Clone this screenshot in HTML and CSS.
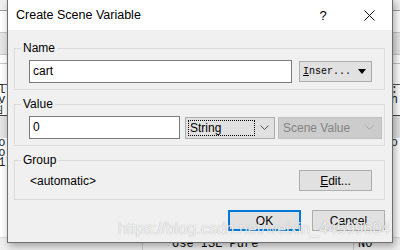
FILE: index.html
```html
<!DOCTYPE html>
<html lang="en">
<head>
  <meta charset="UTF-8" />
  <title>Create Scene Variable</title>
  <link rel="stylesheet" href="styles.css">
</head>
<body>
  <!-- window behind the dialog -->
  <div class="app">
    <div class="app-row r-top"></div>
    <div class="app-row r-white"></div>
    <div class="app-row r-grey"></div>
    <div class="app-row r-thin"></div>
    <div class="app-row r-head"></div>
    <div class="app-row r-code"><span class="code">  al</span><span class="code right">:</span></div>
    <div class="app-row r-code"><span class="code">  ev</span><span class="code right">h</span></div>
    <div class="app-row r-code"><span class="code"> 函</span></div>
    <div class="app-row r-sel"></div>
    <div class="app-row r-code"><span class="code">  ro</span><span class="code right">o</span></div>
    <div class="app-row r-code"><span class="code">  ro</span></div>
    <div class="app-row r-code"><span class="code">  11</span></div>
    <div class="app-row r-fill"></div>
    <div class="app-row r-bottom">
      <span class="cell c-left"></span>
      <span class="cell c-mid">Use ISE Pure</span>
      <span class="cell c-right">No</span>
    </div>
  </div>

  <div class="dialog">
    <div class="titlebar">
      <span class="title">Create Scene Variable</span>
      <span class="help">?</span>
      <span class="close">
        <svg width="11" height="11" viewBox="0 0 11 11"><path d="M0.5 0.5 L10.5 10.5 M10.5 0.5 L0.5 10.5" stroke="#111" stroke-width="1" fill="none"/></svg>
      </span>
    </div>

    <div class="content">
      <fieldset class="group">
        <legend>Name</legend>
        <div class="row">
          <div class="field name-field">cart</div>
          <div class="btn drop"><span class="mono"><u>I</u>nser...</span><span class="tri"></span></div>
        </div>
      </fieldset>

      <fieldset class="group">
        <legend>Value</legend>
        <div class="row row-value">
          <div class="field value-field">0</div>
          <div class="combo type-combo">
            <span class="focus">String</span>
            <svg class="chev" width="9" height="5" viewBox="0 0 9 5"><path d="M0.5 0.5 L4.5 4.5 L8.5 0.5" stroke="#555" fill="none"/></svg>
          </div>
          <div class="combo disabled">
            <span>Scene Value</span>
            <svg class="chev" width="9" height="5" viewBox="0 0 9 5"><path d="M0.5 0.5 L4.5 4.5 L8.5 0.5" stroke="#aaa" fill="none"/></svg>
          </div>
        </div>
      </fieldset>

      <fieldset class="group group-last">
        <legend>Group</legend>
        <div class="row row-group">
          <span class="auto">&lt;automatic&gt;</span>
          <div class="btn"><span><u>E</u>dit...</span></div>
        </div>
      </fieldset>

      <div class="actions">
        <div class="btn default">OK</div>
        <div class="btn">Cancel</div>
      </div>
    </div>
  </div>

  <div class="watermark">https://blog.csdn.net/weixin_44599604</div>
</body>
</html>
```

FILE: styles.css
```css
body {
  margin: 0;
  width: 400px;
  height: 250px;
  overflow: hidden;
  position: relative;
  background: #f0f0f0;
  font-family: "Liberation Sans", Arial, sans-serif;
  font-size: 12px;
  color: #000;
}

/* background window */
.app {
  height: 250px;
  display: flex;
  flex-direction: column;
  font-family: "Liberation Mono", "Noto Sans CJK SC", monospace;
  font-size: 12px;
}
.app-row {
  display: flex;
  justify-content: space-between;
  background: #fff;
  flex-shrink: 0;
}
.r-top { height: 10px; background: #f0f0f0; border-bottom: 1px solid #a0a0a0; }
.r-white { height: 21px; border-bottom: 1px solid #c8c8c8; }
.r-grey { height: 21px; background: #e6e6e6; border-bottom: 1px solid #c8c8c8; }
.r-thin { height: 8px; border-bottom: 1px solid #c8c8c8; }
.r-head { height: 20px; border-bottom: 1px solid #555; }
.r-code { height: 10px; line-height: 10px; }
.r-sel { height: 22px; background: #e4e4e4; border-top: 1px solid #444; }
.r-fill { flex: 1; }
.r-bottom {
  height: 12px;
  background: #f0f0f0;
  border-top: 1px solid #ddd;
  justify-content: flex-start;
}
.code { margin-left: -9px; color: #222; }
.code.right { margin-right: 2px; }
.cell { height: 12px; line-height: 12px; }
.c-left { width: 142px; border-right: 1px solid #ccc; }
.c-mid { width: 181px; padding-left: 29px; border-right: 1px solid #ccc; }
.c-right { padding-left: 4px; }

/* dialog */
.dialog {
  position: absolute;
  left: 7px;
  top: -1px;
  width: 386px;
  height: 244px;
  box-sizing: border-box;
  border: 1px solid #6f6f6f;
  background: #f0f0f0;
  box-shadow: 2px 3px 8px rgba(0, 0, 0, 0.35);
}
.titlebar {
  height: 30px;
  background: #fff;
  display: flex;
  align-items: center;
}
.title {
  padding-left: 8px;
  font-size: 12.5px;
  flex: 1;
}
.help {
  font-size: 13px;
  width: 46px;
  text-align: center;
}
.close {
  width: 46px;
  display: flex;
  justify-content: center;
}

.content {
  padding-top: 11px;
}
.group {
  margin: 0 7px 7px 6px;
  padding: 5px 12px 6px 14px;
  border: 1px solid #dcdcdc;
  min-width: 0;
}
.group legend {
  margin-left: -8px;
  padding: 0 2px;
  line-height: 14px;
  font-size: 12px;
}
.group-last {
  margin-bottom: 0;
  padding-top: 3px;
  padding-bottom: 8px;
}
.row {
  display: flex;
  align-items: center;
  gap: 7px;
}
.row-value { gap: 0; }
.row-group { justify-content: space-between; }

.field {
  box-sizing: border-box;
  height: 23px;
  line-height: 21px;
  border: 1px solid #7a7a7a;
  background: #fff;
  padding-left: 3px;
  flex-shrink: 0;
}
.name-field { width: 263px; }
.value-field { width: 151px; }

.btn {
  box-sizing: border-box;
  width: 73px;
  height: 21px;
  border: 1px solid #adadad;
  background: #e1e1e1;
  display: flex;
  align-items: center;
  justify-content: center;
  flex-shrink: 0;
}
.btn.default {
  border: 2px solid #0078d7;
}
.drop {
  justify-content: space-between;
  padding: 0 5px 0 3px;
}
.mono {
  font-family: "Liberation Mono", monospace;
  font-size: 10px;
}
.tri {
  width: 0;
  height: 0;
  border-left: 4px solid transparent;
  border-right: 4px solid transparent;
  border-top: 5px solid #000;
}

.combo {
  box-sizing: border-box;
  height: 22px;
  border: 1px solid #adadad;
  background: #e1e1e1;
  display: flex;
  align-items: center;
  justify-content: space-between;
  flex-shrink: 0;
}
.type-combo {
  width: 90px;
  margin-left: 5px;
  padding: 0 5px 0 2px;
}
.focus {
  box-sizing: border-box;
  width: 67px;
  height: 16px;
  line-height: 14px;
  border: 1px dotted #000;
  padding-left: 1px;
}
.combo.disabled {
  width: 104px;
  margin-left: 3px;
  padding: 0 7px 0 4px;
  background: #cccccc;
  border-color: #bfbfbf;
  color: #838383;
}
.auto {
  padding-left: 1px;
}

.actions {
  display: flex;
  justify-content: flex-end;
  gap: 11px;
  margin-top: 10px;
  padding-right: 7px;
}

.watermark {
  position: absolute;
  left: 118px;
  top: 220px;
  font-size: 16px;
  color: rgba(255, 255, 255, 0.85);
  text-shadow: 0 0 1px rgba(0, 0, 0, 0.35);
}
```
